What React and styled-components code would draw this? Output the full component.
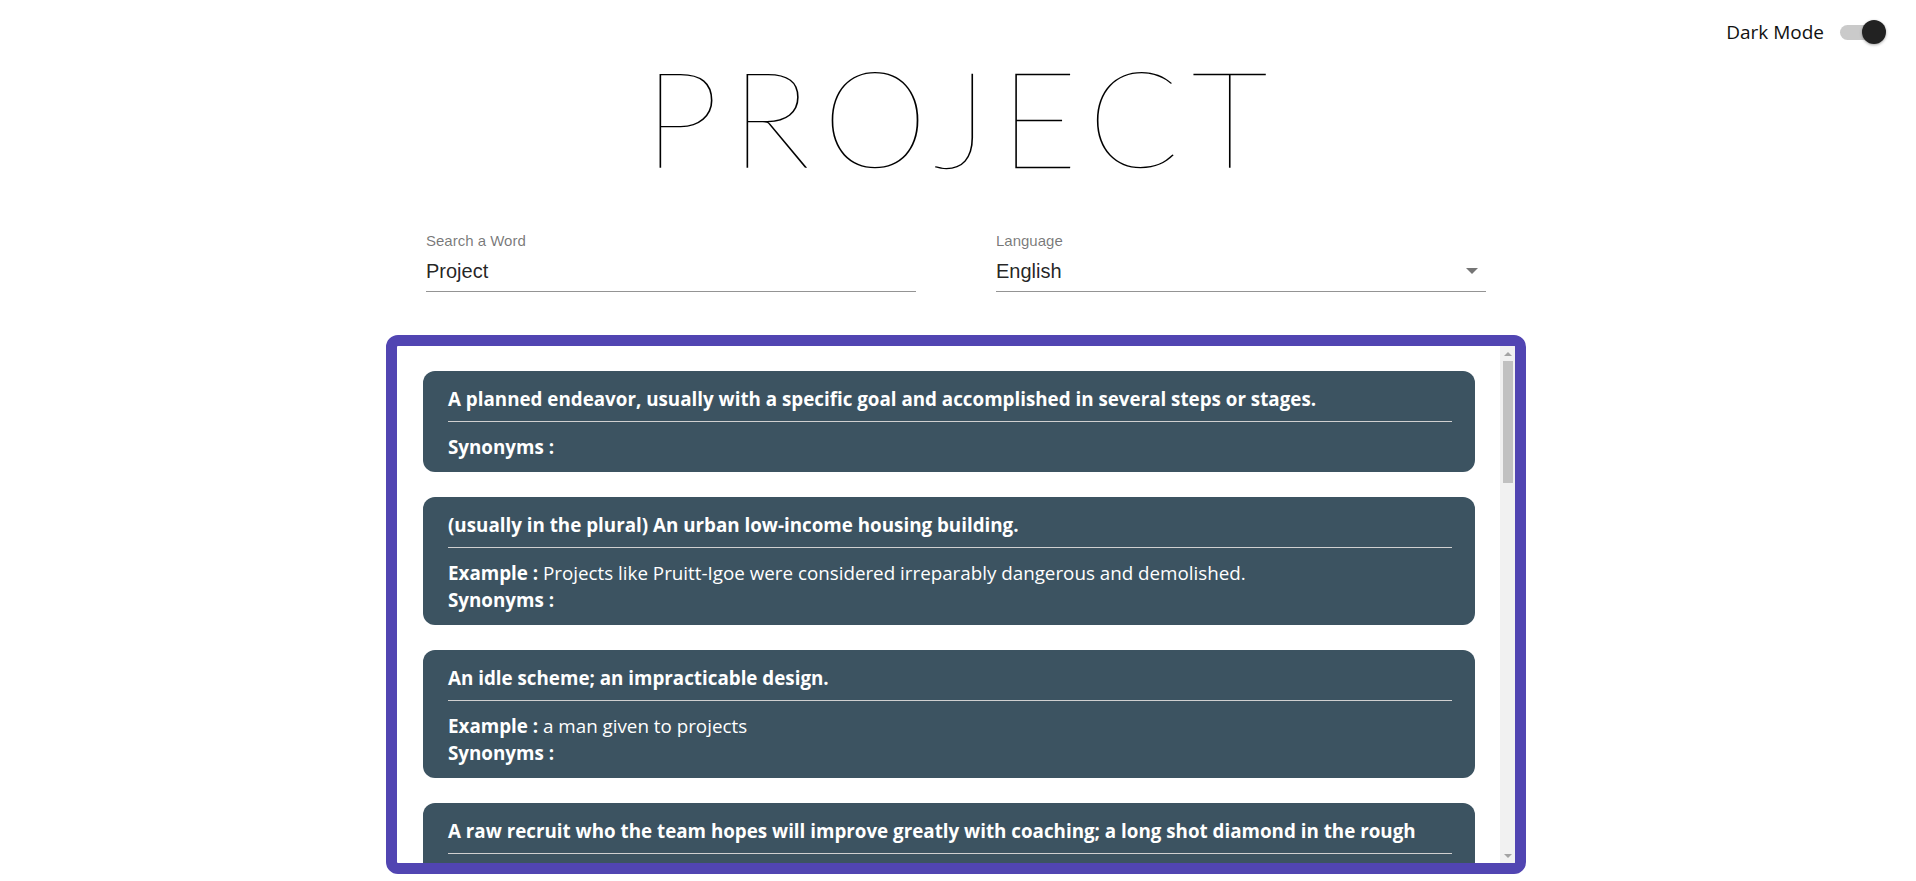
import React from "react";
import styled, { createGlobalStyle } from "styled-components";

const GlobalStyle = createGlobalStyle`
  html, body { margin: 0; padding: 0; background: #ffffff; }
  body { font-family: "Open Sans", "Noto Sans", sans-serif; color: #000; }
  * { box-sizing: border-box; }
`;

const Page = styled.div`
  display: flex;
  flex-direction: column;
  height: 881px;
  overflow: hidden;
  padding-right: 4px;
`;

const TopBar = styled.div`
  display: flex;
  justify-content: flex-end;
  align-items: center;
  gap: 16px;
  height: 64px;
  padding-right: 32px;
`;

const ModeLabel = styled.span`
  font-family: "Open Sans", sans-serif;
  font-size: 19px;
  color: #111;
`;

const SwitchTrack = styled.div`
  position: relative;
  width: 40px;
  height: 15px;
  border-radius: 8px;
  background: #cacaca;
  display: flex;
  align-items: center;
`;

const SwitchThumb = styled.div`
  position: absolute;
  right: -6px;
  width: 24px;
  height: 24px;
  border-radius: 50%;
  background: #222;
  box-shadow: 0 1px 3px rgba(0, 0, 0, 0.35);
`;

const Container = styled.main`
  width: 1140px;
  margin: 0 auto;
  display: flex;
  flex-direction: column;
`;

const Title = styled.h1`
  margin: -14px 0 0;
  padding-left: 12px;
  text-align: center;
  font-family: "Lato", sans-serif;
  font-weight: 100;
  font-size: 134px;
  line-height: 1;
  letter-spacing: 12.2px;
  color: #000;
`;

const FormRow = styled.div`
  display: grid;
  grid-template-columns: 1fr 1fr;
  column-gap: 80px;
  padding: 0 40px;
  margin-top: 48px;
`;

const Field = styled.div`
  display: flex;
  flex-direction: column;
  font-family: "Liberation Sans", Arial, sans-serif;
`;

const FieldLabel = styled.label`
  font-size: 15px;
  line-height: 18px;
  color: rgba(0, 0, 0, 0.54);
`;

const FieldValue = styled.div`
  display: flex;
  align-items: center;
  justify-content: space-between;
  font-size: 20px;
  line-height: 24px;
  color: rgba(0, 0, 0, 0.87);
  padding: 9px 0 8px;
  border-bottom: 1px solid rgba(0, 0, 0, 0.42);
`;

const Caret = styled.span`
  width: 0;
  height: 0;
  margin-right: 8px;
  border-left: 6px solid transparent;
  border-right: 6px solid transparent;
  border-top: 6px solid rgba(0, 0, 0, 0.54);
`;

const Results = styled.section`
  margin-top: 43px;
  height: 539px;
  border: 11px solid #5145b2;
  border-radius: 12px;
  overflow: hidden;
  display: flex;
  background: #fff;
`;

const List = styled.div`
  flex: 1;
  min-width: 0;
  overflow: hidden;
  padding: 25px 25px 25px 26px;
  display: flex;
  flex-direction: column;
  gap: 25px;
`;

const ScrollBar = styled.div`
  flex: none;
  width: 15px;
  background: #f1f1f1;
  display: flex;
  flex-direction: column;
  align-items: center;
`;

const ScrollArrow = styled.div`
  flex: none;
  width: 15px;
  height: 15px;
  display: flex;
  align-items: center;
  justify-content: center;
  margin-top: ${(p) => (p.$down ? "auto" : "0")};

  &::before {
    content: "";
    width: 0;
    height: 0;
    border-left: 4px solid transparent;
    border-right: 4px solid transparent;
    ${(p) =>
      p.$down ? "border-top: 4px solid #a3a3a3;" : "border-bottom: 4px solid #a3a3a3;"}
  }
`;

const ScrollThumb = styled.div`
  flex: none;
  width: 10px;
  height: 122px;
  background: #c1c1c1;
`;

const Card = styled.article`
  flex: none;
  background: #3c5361;
  color: #fff;
  border-radius: 12px;
  padding: 15px 23px 11px 25px;
  font-family: "Open Sans", sans-serif;
  font-size: 18.8px;
  line-height: 27px;
`;

const Definition = styled.div`
  font-weight: 700;
`;

const Rule = styled.hr`
  margin: 8px 0 12px;
  border: none;
  height: 1px;
  background: #d0d0d0;
`;

const Line = styled.div`
  font-weight: 400;
`;

const Key = styled.b`
  font-weight: 700;
`;

const meanings = [
  { def: "A planned endeavor, usually with a specific goal and accomplished in several steps or stages." },
  {
    def: "(usually in the plural) An urban low-income housing building.",
    example: "Projects like Pruitt-Igoe were considered irreparably dangerous and demolished.",
  },
  { def: "An idle scheme; an impracticable design.", example: "a man given to projects" },
  {
    def: "A raw recruit who the team hopes will improve greatly with coaching; a long shot diamond in the rough",
    example: "The rookie is a project, but scouts love his arm.",
  },
  { def: "To extend beyond a surface.", example: "The balcony projects out over the garden." },
];

export default function App() {
  return (
    <Page>
      <GlobalStyle />
      <TopBar>
        <ModeLabel>Dark Mode</ModeLabel>
        <SwitchTrack>
          <SwitchThumb />
        </SwitchTrack>
      </TopBar>
      <Container>
        <Title>PROJECT</Title>
        <FormRow>
          <Field>
            <FieldLabel>Search a Word</FieldLabel>
            <FieldValue>Project</FieldValue>
          </Field>
          <Field>
            <FieldLabel>Language</FieldLabel>
            <FieldValue>
              English
              <Caret />
            </FieldValue>
          </Field>
        </FormRow>
        <Results>
          <List>
            {meanings.map((m, i) => (
              <Card key={i}>
                <Definition>{m.def}</Definition>
                <Rule />
                {m.example && (
                  <Line>
                    <Key>Example :</Key> {m.example}
                  </Line>
                )}
                <Line>
                  <Key>Synonyms :</Key>
                </Line>
              </Card>
            ))}
          </List>
          <ScrollBar aria-hidden="true">
            <ScrollArrow />
            <ScrollThumb />
            <ScrollArrow $down />
          </ScrollBar>
        </Results>
      </Container>
    </Page>
  );
}
